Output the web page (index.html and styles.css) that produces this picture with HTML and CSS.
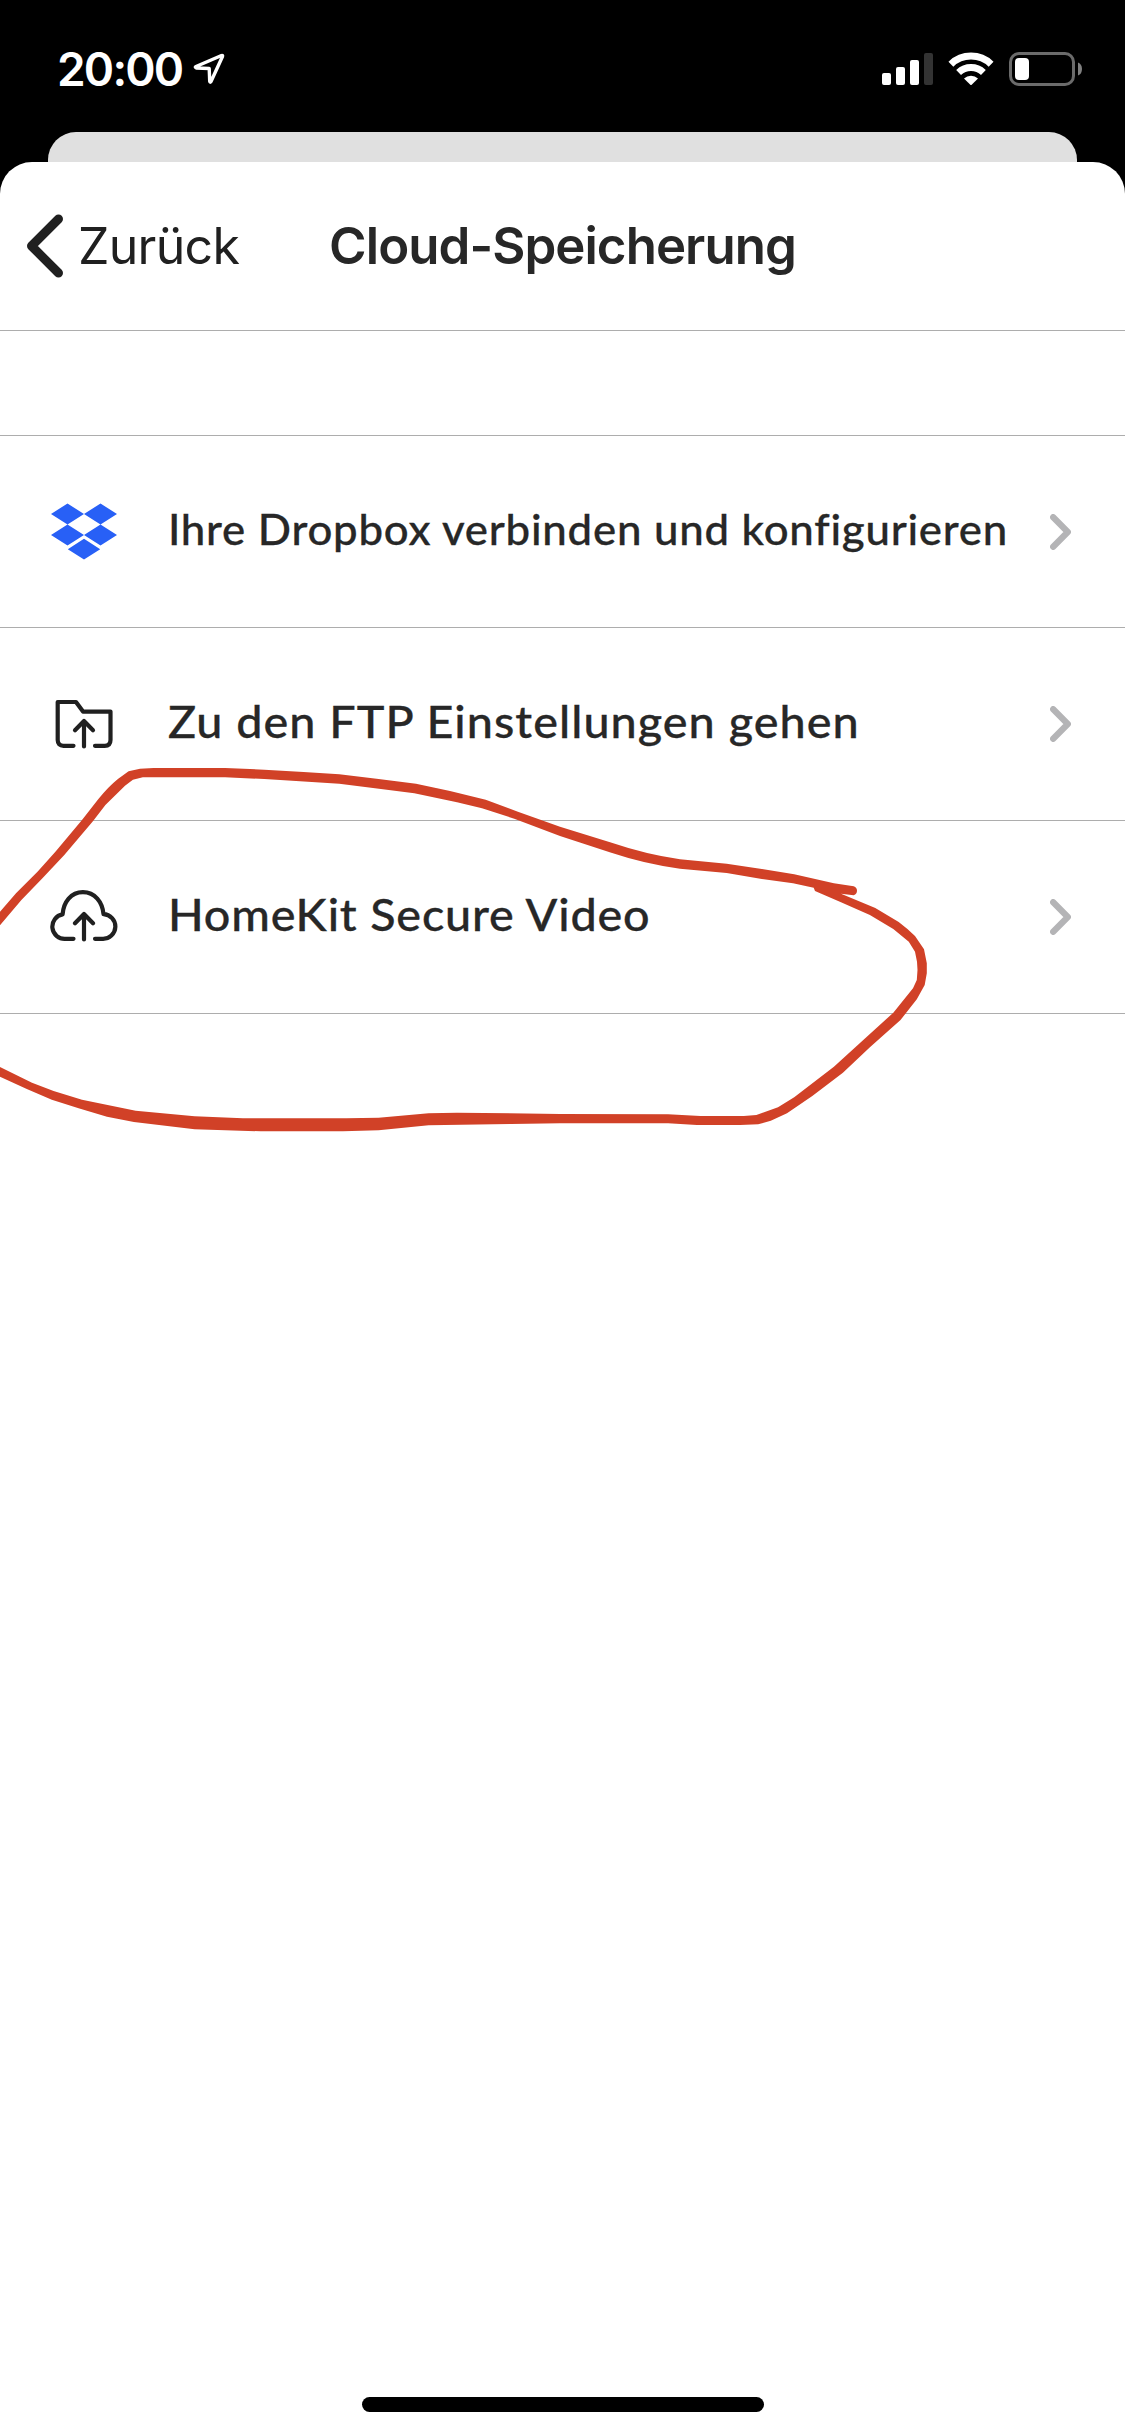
FILE: index.html
```html
<!DOCTYPE html>
<html lang="de">
<head>
<meta charset="utf-8">
<title>Cloud-Speicherung</title>
<link rel="stylesheet" href="styles.css">
</head>
<body>
<div class="screen">
  <header class="status">
    <div class="status-left">
      <span class="time">20:00</span>
      <svg class="location" width="32" height="32" viewBox="0 0 32 32"><path d="M3 13.500 28.500 2.500Q30 2 29.500 3.500L18 28.500Q17 30 16.700 28.200L16.200 15.500 3.300 15Q1.500 14.200 3 13.500Z"/></svg>
    </div>
    <div class="status-right">
      <svg width="51" height="34" viewBox="0 0 51 34" fill="#fff"><rect y="21" width="9" height="12" rx="2"/><rect x="14" y="15" width="9" height="18" rx="2"/><rect x="28" y="8" width="9" height="25" rx="2"/><rect x="42" y="1" width="9" height="32" rx="2" fill="#333"/></svg>
      <svg class="wifi" width="46" height="34" viewBox="0 0 46 34"><path class="arc" d="M2.900 12.200A29 29 0 0 1 43.100 12.200M10.600 20.500A18 18 0 0 1 35.400 20.500"/><path fill="#fff" d="M16 26.500a10.200 10.200 0 0 1 14 0L23.700 32.800q-.7.6-1.400 0Z"/></svg>
      <svg width="74" height="34" viewBox="0 0 74 34"><rect x="1.500" y="1.500" width="63" height="31" rx="8.500" fill="none" stroke="#6b6b6b" stroke-width="3"/><rect x="6" y="6" width="14" height="22" rx="4" fill="#fff"/><path d="M69 10.500q4 1.500 4 6.500t-4 6.500Z" fill="#808080"/></svg>
    </div>
  </header>
  <div class="sheet-behind"></div>
  <main class="sheet">
    <nav class="nav">
      <a class="back">
        <svg width="38" height="64" viewBox="0 0 38 64"><path d="M32.500 5 5.500 32 32.500 59" fill="none" stroke="#202020" stroke-width="9" stroke-linecap="round" stroke-linejoin="round"/></svg>
        <span class="back-label">Zurück</span>
      </a>
      <h1 class="title">Cloud-Speicherung</h1>
    </nav>
    <div class="spacer"></div>
    <ul class="list">
      <li class="row row-first">
        <svg class="icon" width="68" height="60" viewBox="0 0 68 60" fill="#2860f6"><path d="M1 12 17.500 1.500 34 12 17.500 22.500ZM34 12 50.500 1.500 67 12 50.500 22.500ZM1 33 17.500 22.500 34 33 17.500 43.500ZM34 33 50.500 22.500 67 33 50.500 43.500ZM17.800 47.200 34 36.800 50.200 47.200 34 57.500Z"/></svg>
        <span class="label label-dropbox">Ihre Dropbox verbinden und konfigurieren</span>
        <svg class="chevron" width="21" height="36" viewBox="0 0 21 36"><path d="M3.200 3.200 17.800 18 3.200 32.800"/></svg>
      </li>
      <li class="row">
        <svg class="icon line" width="68" height="60" viewBox="0 0 68 60"><path d="M23.500 51.800H13.500Q7.700 51.800 7.700 46V8H26L33 17.600H60.500V46Q60.500 51.800 54.700 51.800H45M34 52.500V27M25 36.300 34 27 43 36.300"/></svg>
        <span class="label label-ftp">Zu den FTP Einstellungen gehen</span>
        <svg class="chevron" width="21" height="36" viewBox="0 0 21 36"><path d="M3.200 3.200 17.800 18 3.200 32.800"/></svg>
      </li>
      <li class="row">
        <svg class="icon line" width="68" height="60" viewBox="0 0 68 60"><path d="M23.500 51.800H15.500A12.300 12.300 0 0 1 12.600 27.400C13.500 15 21 5.200 32.900 5.200S52.500 15 53.500 27.200A12.300 12.300 0 0 1 52.600 51.800H45M34 52.500V27M25 36.300 34 27 43 36.300"/></svg>
        <span class="label label-homekit">HomeKit Secure Video</span>
        <svg class="chevron" width="21" height="36" viewBox="0 0 21 36"><path d="M3.200 3.200 17.800 18 3.200 32.800"/></svg>
      </li>
    </ul>
    <div class="home-bar"></div>
  </main>
  <svg class="marker" width="1125" height="420" viewBox="0 740 1125 420"><path d="M-2 914L0 911.700 16 893.300 37.500 871.700 55.400 851.700 82 820 98.200 799.300Q108 787 117.900 779L128.600 771.300 140 768.700 153.600 768H225L264.300 769.700 303.600 772 339.300 774.300 378.600 779 416 783.700 450 791 485.700 799.700 517.900 811.700 560 826.700 611.700 842.700 Q645 854 680 859.300L726.700 863.700 761.800 869 794.200 874.300 833.900 883.300 853.700 886.300Q857 887.500 857 890.700T853.700 895.300L841 893.700 875.300 908 898.700 922Q908 929 915 936L924 949.300 926.800 963.300V973.300L924.700 985 916.800 999.300 900.500 1020 869.900 1047.300 842.900 1072.700 812.300 1096 787 1113.300 770.800 1120.700 758.200 1124.300 740 1125H697L668 1123.300H560L510.700 1124 428.600 1125.300 378.600 1130.300 342.900 1131.300H260.700L194.600 1129.300 133.900 1122 107 1116.700 78.600 1108.300 51.800 1099.700 26.800 1089 0 1076.700H-2V1066L0 1067 32 1082.700 53.600 1091 82 1099.700 135.700 1110.700 194.600 1116.300 242.900 1118.300H346.400L378.600 1117.700 428.600 1113.300 457 1112.700 560 1114 668 1114.300 700.500 1116H743.800L756.400 1115 778 1107.300 794.200 1097.300 833.900 1066.700 866.300 1037.300 893.300 1012.700 913 988.300 916.800 980 917.500 970 917 961.700 915 951.700 908.800 941.700 893.300 929 869.900 915 841 902.300 815 891 813.700 887.700 793 883.300 761.800 879 726.700 873 680 868.700Q645 864 610.500 852.500L560 836 514.300 818.700 482 808.300 457 802.300 414.300 793.300 375 788.300 339.300 783.700 300 781.300 264.300 779 225 777.300H142.900L132.900 779.700 125 785.700 105.400 805 92.900 821.300 64.300 855 42.900 877.700 21.400 900 0 925.300-2 928Z"/></svg>
</div>
</body>
</html>
```
FILE: styles.css
```css
* { box-sizing: border-box; margin: 0; padding: 0; }
body { background: #000; font-family: Inter, "Liberation Sans", sans-serif; color: #272727; }
svg { display: block; flex: none; }
.screen { position: relative; width: 1125px; height: 2436px; display: flex; flex-direction: column; overflow: hidden; background: #000; }
.status { height: 132px; padding: 52px 42px 0 57px; display: flex; justify-content: space-between; align-items: flex-start; }
.status-left { display: flex; gap: 11px; align-items: flex-start; }
.time { color: #fff; font-size: 46px; font-weight: 600; line-height: 34px; letter-spacing: -1.8px; }
.location { fill: none; stroke: #fff; stroke-width: 3.4; stroke-linejoin: round; margin-top: 1px; }
.status-right { display: flex; gap: 15px; }
.arc { fill: none; stroke: #fff; stroke-width: 7; }
.sheet-behind { height: 30px; margin: 0 48px; background: #e0e0e0; border-radius: 28px 28px 0 0; }
.sheet { flex: 1; background: #fff; border-radius: 32px 32px 0 0; display: flex; flex-direction: column; }
.nav { height: 169px; border-bottom: 1px solid #adadad; display: grid; grid-template-columns: 1fr auto 1fr; align-items: center; padding: 0 26px; }
.back { display: flex; align-items: center; gap: 14px; color: #202020; }
.back-label { font-size: 50px; line-height: 64px; letter-spacing: -0.7px; }
.title { font-size: 51px; font-weight: 600; line-height: 64px; letter-spacing: -0.95px; }
.spacer { height: 104px; }
.list { list-style: none; border-top: 1px solid #adadad; }
.row { height: 193px; border-bottom: 1px solid #adadad; display: flex; align-items: center; padding: 0 54px 0 50px; }
.row-first { height: 192px; }
.line { fill: none; stroke: #202020; stroke-width: 4.2; stroke-linecap: round; stroke-linejoin: round; }
.label { flex: 1; margin-left: 50px; padding-bottom: 7px; font-family: Lato, sans-serif; font-weight: 500; font-size: 44.500px; line-height: 60px; white-space: nowrap; transform: scaleX(1.05); transform-origin: left; -webkit-text-stroke: 0.3px #272727; }
.label-dropbox { padding-bottom: 5px; font-size: 41.700px; letter-spacing: 0.72px; }
.label-ftp { letter-spacing: 1px; }
.label-homekit { letter-spacing: 0.78px; }
.chevron { fill: none; stroke: #b4b4b6; stroke-width: 6.3; stroke-linecap: round; stroke-linejoin: round; }
.home-bar { width: 402px; height: 15px; margin: auto auto 24px 362px; border-radius: 8px; background: #000; }
.marker { position: absolute; left: 0; top: 740px; fill: #d14127; }
```
